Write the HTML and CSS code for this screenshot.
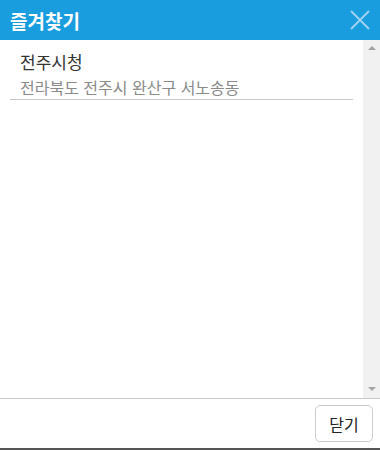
FILE: index.html
```html
<!DOCTYPE html>
<html lang="ko">
<head>
    <meta charset="UTF-8">
    <meta name="viewport" content="width=device-width, initial-scale=1.0">
    <title>즐겨찾기</title>
    <link rel="stylesheet" href="styles.css">
</head>
<body>
    <div class="popup">
        <div class="popupHeader">
            <div class="popupTitle">즐겨찾기</div>
            <button type="button" class="closeIcon" aria-label="닫기">
                <svg width="20" height="20" viewBox="0 0 20 20">
                    <path d="M1 1 L19 19 M19 1 L1 19" stroke="#9fd3f2" stroke-width="1.8" fill="none"/>
                </svg>
            </button>
        </div>
        <div class="popupBody">
            <ul class="favList">
                <li class="favItem">
                    <div class="favName">전주시청</div>
                    <div class="favAddr">전라북도 전주시 완산구 서노송동</div>
                </li>
            </ul>
            <div class="scrollBar">
                <span class="arrowUp"></span>
                <span class="arrowDown"></span>
            </div>
        </div>
        <div class="popupFooter">
            <button type="button" class="closeButton">닫기</button>
        </div>
    </div>
</body>
</html>
```

FILE: styles.css
```css
* {
    margin: 0;
    padding: 0;
    box-sizing: border-box;
}
html, body {
    height: 100%;
}
body {
    font-family: "Noto Sans CJK KR", "Noto Sans", sans-serif;
    background-color: white;
}
.popup {
    height: 100%;
    display: flex;
    flex-direction: column;
    border-bottom: 2px solid #555;
}
.popupHeader {
    height: 40px;
    background-color: #199ddf;
    display: flex;
    align-items: center;
    justify-content: space-between;
    padding: 0 10px 0 10px;
}
.popupTitle {
    color: white;
    font-size: 19px;
    font-weight: bold;
}
.closeIcon {
    border: none;
    background: none;
    width: 20px;
    height: 20px;
    display: flex;
}
.popupBody {
    flex: 1;
    display: flex;
    min-height: 0;
}
.favList {
    list-style: none;
    flex: 1;
    padding: 0 10px;
}
.favItem {
    padding: 8px 10px 0 10px;
    border-bottom: 1px solid #c8c8c8;
}
.favName {
    font-size: 17px;
    line-height: 27px;
    color: #333;
}
.favAddr {
    font-size: 16px;
    line-height: 24px;
    color: #8a8a8a;
}
.scrollBar {
    width: 17px;
    background-color: #f1f1f1;
    display: flex;
    flex-direction: column;
    justify-content: space-between;
    align-items: center;
    padding: 6px 0 7px 0;
}
.arrowUp {
    border-left: 4px solid transparent;
    border-right: 4px solid transparent;
    border-bottom: 4px solid #a3a3a3;
}
.arrowDown {
    border-left: 4px solid transparent;
    border-right: 4px solid transparent;
    border-top: 4px solid #a3a3a3;
}
.popupFooter {
    height: 50px;
    border-top: 1px solid #c8c8c8;
    display: flex;
    justify-content: flex-end;
    align-items: center;
    padding-right: 7px;
}
.closeButton {
    width: 58px;
    height: 37px;
    background-color: white;
    border: 1px solid #ccc;
    border-radius: 5px;
    font-family: "Noto Sans CJK KR", "Noto Sans", sans-serif;
    font-size: 16px;
    color: #222;
}
```
